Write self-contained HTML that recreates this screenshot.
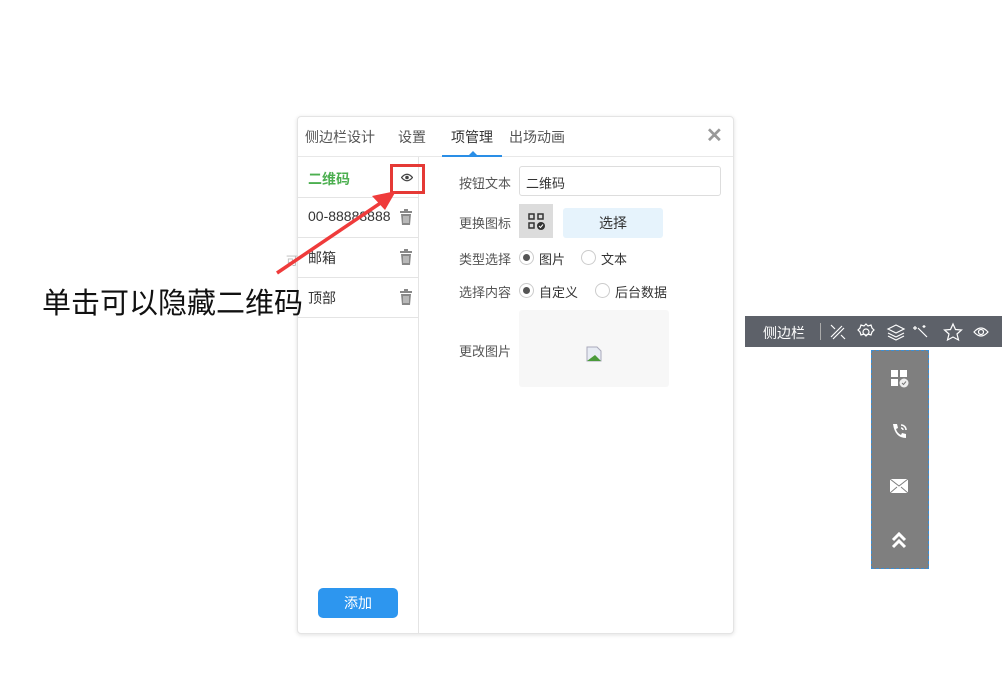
<!DOCTYPE html>
<html><head><meta charset="utf-8"><style>
*{margin:0;padding:0;box-sizing:border-box}
body{width:1002px;height:692px;background:#fff;position:relative;overflow:hidden;font-family:"Liberation Sans","Noto Sans CJK SC",sans-serif;font-size:13px;color:#555}
.a{position:absolute}
.dlg{left:297px;top:116px;width:437px;height:518px;border:1px solid #e4e4e4;border-radius:4px;box-shadow:0 1px 4px rgba(0,0,0,.12);background:#fff}
.tab{top:127px;font-size:14px;color:#555}
.row{left:298px;width:120px;height:40px;border-bottom:1px solid #e4e4e4}
.lbl{left:459px;color:#555;font-size:13px}
.radio{width:15px;height:15px;border:1px solid #ccc;border-radius:50%;background:#fff}
.radio.on::after{content:"";position:absolute;left:3px;top:3px;width:7px;height:7px;border-radius:50%;background:#555}
</style></head><body>
<div class="a dlg"></div>
<div class="a tab" style="left:305px">侧边栏设计</div>
<div class="a tab" style="left:398px">设置</div>
<div class="a tab" style="left:451px;color:#333">项管理</div>
<div class="a tab" style="left:509px">出场动画</div>
<div class="a" style="left:706px;top:123px;font-size:20px;color:#999;font-weight:bold">✕</div>
<div class="a" style="left:298px;top:156px;width:435px;height:1px;background:#e8e8e8"></div>
<div class="a" style="left:442px;top:155px;width:60px;height:2px;background:#2a8ee6"></div>
<div class="a" style="left:468px;top:151px;width:0;height:0;border-left:5px solid transparent;border-right:5px solid transparent;border-bottom:5px solid #2a8ee6"></div>
<div class="a" style="left:418px;top:157px;width:1px;height:476px;background:#e4e4e4"></div>
<div class="a row" style="top:158px"><span class="a" style="left:10px;top:11px;color:#4caf50;font-size:14px;font-weight:bold">二维码</span></div>
<div class="a row" style="top:198px"><span class="a" style="left:10px;top:10px;color:#333;font-size:14px">00-88888888</span></div>
<div class="a row" style="top:238px"><span class="a" style="left:10px;top:10px;color:#333;font-size:14px">邮箱</span></div>
<div class="a row" style="top:278px"><span class="a" style="left:10px;top:10px;color:#333;font-size:14px">顶部</span></div>
<svg class="a" style="left:399px;top:209px" width="14" height="16" viewBox="0 0 14 16"><rect x="1" y="2" width="12" height="2" fill="#888"/><rect x="5" y="0" width="4" height="2" fill="#888"/><path d="M2 5h10l-1 11H3z" fill="#888"/><path d="M5 7v7M7 7v7M9 7v7" stroke="#fff" stroke-width=".8"/></svg>
<svg class="a" style="left:399px;top:249px" width="14" height="16" viewBox="0 0 14 16"><rect x="1" y="2" width="12" height="2" fill="#888"/><rect x="5" y="0" width="4" height="2" fill="#888"/><path d="M2 5h10l-1 11H3z" fill="#888"/><path d="M5 7v7M7 7v7M9 7v7" stroke="#fff" stroke-width=".8"/></svg>
<svg class="a" style="left:399px;top:289px" width="14" height="16" viewBox="0 0 14 16"><rect x="1" y="2" width="12" height="2" fill="#888"/><rect x="5" y="0" width="4" height="2" fill="#888"/><path d="M2 5h10l-1 11H3z" fill="#888"/><path d="M5 7v7M7 7v7M9 7v7" stroke="#fff" stroke-width=".8"/></svg>
<div class="a" style="left:286px;top:252px;color:#bbb;font-size:12px">可</div>
<svg class="a" style="left:401px;top:173px" width="12" height="9" viewBox="0 0 12 9"><path d="M0.5 4.5Q6 -2 11.5 4.5Q6 11 0.5 4.5z" fill="none" stroke="#444" stroke-width="1.3"/><circle cx="6" cy="4.5" r="1.8" fill="#444"/></svg>
<div class="a" style="left:390px;top:164px;width:35px;height:30px;border:3px solid #e53935"></div>
<svg class="a" style="left:0;top:0" width="1002" height="692"><path d="M277 273L385 200" stroke="#ef3b3b" stroke-width="3.5"/><path d="M396 191L372 196L385 210z" fill="#ef3b3b"/></svg>
<div class="a" style="left:42px;top:280px;font-size:29px;color:#111">单击可以隐藏二维码</div>
<div class="a" style="left:318px;top:588px;width:80px;height:30px;background:#2d96ef;border-radius:5px;color:#fff;font-size:14px;text-align:center;line-height:30px">添加</div>
<div class="a lbl" style="top:173px">按钮文本</div>
<div class="a" style="left:519px;top:166px;width:202px;height:30px;border:1px solid #ddd;border-radius:3px;padding:6px 6px;color:#333">二维码</div>
<div class="a lbl" style="top:213px">更换图标</div>
<div class="a" style="left:519px;top:204px;width:34px;height:34px;background:#dcdcdc"></div>
<svg class="a" style="left:528px;top:213px" width="17" height="17" viewBox="0 0 17 17"><g fill="none" stroke="#333" stroke-width="1.5"><rect x="1" y="1" width="5" height="5"/><rect x="10" y="1" width="5" height="5"/><rect x="1" y="10" width="5" height="5"/></g><circle cx="13" cy="13" r="4" fill="#333"/><path d="M11 13l1.5 1.5 2.5-3" stroke="#fff" fill="none"/></svg>
<div class="a" style="left:563px;top:208px;width:100px;height:30px;background:#e6f3fc;border-radius:3px;text-align:center;line-height:30px;color:#333;font-size:14px">选择</div>
<div class="a lbl" style="top:249px">类型选择</div>
<div class="a radio on" style="left:519px;top:250px"></div><div class="a" style="left:539px;top:249px;color:#333">图片</div>
<div class="a radio" style="left:581px;top:250px"></div><div class="a" style="left:601px;top:249px;color:#333">文本</div>
<div class="a lbl" style="top:282px">选择内容</div>
<div class="a radio on" style="left:519px;top:283px"></div><div class="a" style="left:539px;top:282px;color:#333">自定义</div>
<div class="a radio" style="left:595px;top:283px"></div><div class="a" style="left:615px;top:282px;color:#333">后台数据</div>
<div class="a lbl" style="top:341px">更改图片</div>
<div class="a" style="left:519px;top:310px;width:150px;height:77px;background:#f7f7f7;border-radius:3px"></div>
<svg class="a" style="left:586px;top:346px" width="16" height="16" viewBox="0 0 16 16"><path d="M1 1h10l4 4v10H1z" fill="#e8ecf4" stroke="#aab"/><path d="M1 15L9 9l6 6z" fill="#4a9a3a"/></svg>
<div class="a" style="left:745px;top:316px;width:257px;height:31px;background:#5d6169"></div>
<div class="a" style="left:763px;top:323px;color:#fff;font-size:14px">侧边栏</div>
<div class="a" style="left:820px;top:323px;width:1px;height:17px;background:#aaa"></div>
<svg class="a" style="left:828px;top:322px" width="170" height="20" viewBox="0 0 170 20" fill="none" stroke="#fff" stroke-width="1.2"><path d="M3 15L14 4M5 17L16 6M3 3l4 4M13 13l4 4"/><circle cx="38" cy="10" r="3"/><path d="M38 2l2 2 3-1 1 3 2 2-2 2-1 3-3-1-2 2-2-2-3 1-1-3-2-2 2-2 1-3 3 1z"/><path d="M60 7l8-4 8 4-8 4zM60 11l8 4 8-4M60 14l8 4 8-4"/><path d="M90 6l9 9M87 4v4M85 6h4M96 3v3M94.5 4.5h3"/><path d="M125 2l2.5 5.5 6 .5-4.5 4 1.5 6-5.5-3-5.5 3 1.5-6-4.5-4 6-.5z"/><path d="M146 10q7-8 14 0q-7 8-14 0z"/><circle cx="153" cy="10" r="2.5"/></svg>
<div class="a" style="left:871px;top:350px;width:58px;height:219px;background:#7f7f7f;border:1px dashed #3b8ed4"></div>
<svg class="a" style="left:890px;top:369px" width="19" height="19" viewBox="0 0 19 19" fill="#fff"><rect x="1" y="1" width="7" height="7"/><rect x="10" y="1" width="7" height="7"/><rect x="1" y="10" width="7" height="7"/><circle cx="14" cy="14" r="4.5" fill="#eee"/><path d="M12 14l1.5 1.5 2.5-3" stroke="#777" fill="none"/></svg>
<svg class="a" style="left:890px;top:422px" width="19" height="19" viewBox="0 0 19 19"><path d="M3 2l4 0 1 4-2 1q1 4 5 6l1-2 4 1 0 4q-11 0-13-14z" fill="#fff"/><path d="M11 3a5 5 0 0 1 5 5M11 6a2 2 0 0 1 2 2" stroke="#fff" fill="none" stroke-width="1.5"/></svg>
<svg class="a" style="left:890px;top:479px" width="18" height="14" viewBox="0 0 18 14"><rect width="18" height="14" fill="#fff"/><path d="M0 0l9 7 9-7M0 14l7-6M18 14l-7-6" stroke="#7f7f7f" fill="none"/></svg>
<svg class="a" style="left:891px;top:531px" width="16" height="18" viewBox="0 0 16 18"><path d="M2 9l6-6 6 6M2 16l6-6 6 6" stroke="#fff" stroke-width="3" fill="none"/></svg>
</body></html>
